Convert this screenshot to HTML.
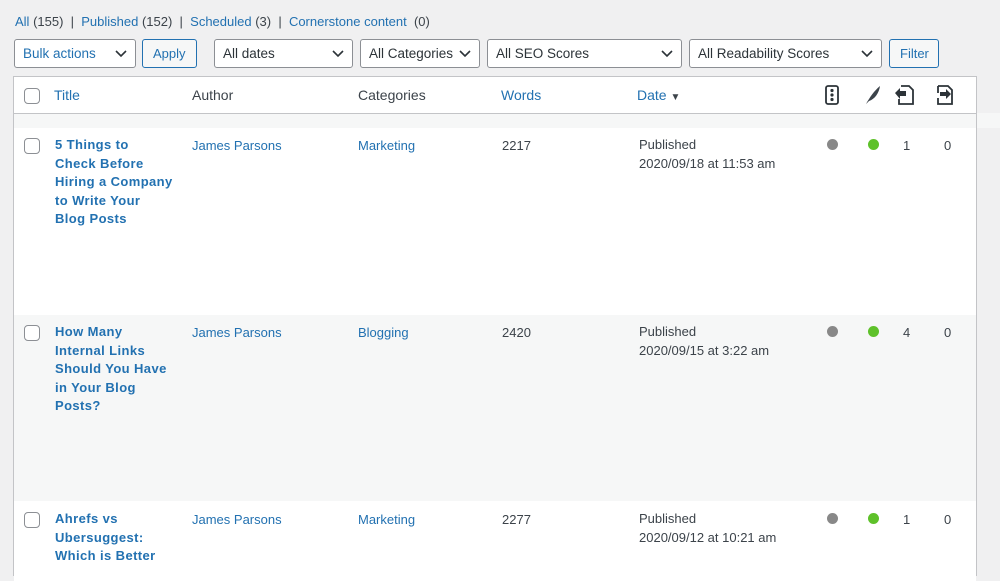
<!DOCTYPE html>
<html><head><style>
*{box-sizing:border-box;margin:0;padding:0}
body{width:1000px;height:560px;overflow:hidden;background:#f0f0f1;font-family:"Liberation Sans",sans-serif;font-size:13px;color:#3c434a;position:relative}
.a{position:absolute;white-space:nowrap}
a,.l{color:#2271b1;text-decoration:none}
.sel{position:absolute;top:39px;height:29px;border:1px solid #8c8f94;border-radius:3px;background:#fff;padding:6px 8px;font-size:13.5px;color:#2c3338}
.sel svg{position:absolute;right:8px;top:10px}
.btn{position:absolute;top:39px;height:29px;border:1px solid #2271b1;border-radius:3px;background:#f6f7f7;color:#2271b1;font-size:13px;padding:6px 10px}
.tbl{position:absolute;left:13px;top:76px;width:964px;height:500px;border:1px solid #c3c4c7;background:#fff}
.row{position:absolute;left:0;width:962px}
.cb{position:absolute;width:16px;height:16px;border:1px solid #8c8f94;border-radius:4px;background:#fff}
.t{font-weight:bold;color:#2271b1;font-size:13px;line-height:18.5px;letter-spacing:0.4px}
.dot{position:absolute;width:11px;height:11px;border-radius:50%}
</style></head><body>
<div class="a" style="left:15px;top:14px"><a>All</a> (155) &nbsp;|&nbsp; <a>Published</a> (152) &nbsp;|&nbsp; <a>Scheduled</a> (3) &nbsp;|&nbsp; <a>Cornerstone content</a> &nbsp;(0)</div>
<div class="sel" style="left:14px;width:122px;color:#2271b1">Bulk actions<svg width="12" height="8"><path d="M1 1l5 5 5-5" stroke="#2c3338" stroke-width="1.6" fill="none"/></svg></div>
<div class="btn" style="left:142px;width:55px">Apply</div>
<div class="sel" style="left:214px;width:139px">All dates<svg width="12" height="8"><path d="M1 1l5 5 5-5" stroke="#2c3338" stroke-width="1.6" fill="none"/></svg></div>
<div class="sel" style="left:360px;width:120px">All Categories<svg width="12" height="8"><path d="M1 1l5 5 5-5" stroke="#2c3338" stroke-width="1.6" fill="none"/></svg></div>
<div class="sel" style="left:487px;width:195px">All SEO Scores<svg width="12" height="8"><path d="M1 1l5 5 5-5" stroke="#2c3338" stroke-width="1.6" fill="none"/></svg></div>
<div class="sel" style="left:689px;width:193px">All Readability Scores<svg width="12" height="8"><path d="M1 1l5 5 5-5" stroke="#2c3338" stroke-width="1.6" fill="none"/></svg></div>
<div class="btn" style="left:889px;width:50px">Filter</div>

<div class="tbl">
 <div class="row" style="top:0;height:37px;border-bottom:1px solid #c3c4c7;background:#fff"></div>
 <div class="row" style="top:37px;height:14px;background:#f6f7f7"></div>
 <div class="row" style="top:51px;height:187px;background:#fff"></div>
 <div class="row" style="top:238px;height:186px;background:#f6f7f7"></div>
 <div class="row" style="top:424px;height:80px;background:#fff"></div>
</div>
<div class="a" style="left:977px;top:113px;width:23px;height:15px;background:#f6f7f7"></div>

<div class="cb" style="left:24px;top:88px"></div>
<div class="a l" style="left:54px;top:87px;font-size:14px">Title</div>
<div class="a" style="left:192px;top:87px;font-size:14px">Author</div>
<div class="a" style="left:358px;top:87px;font-size:14px">Categories</div>
<div class="a l" style="left:501px;top:87px;font-size:14px">Words</div>
<div class="a l" style="left:637px;top:87px;font-size:14px">Date <span style="color:#3c434a;font-size:10px">▼</span></div>
<svg class="a" style="left:825px;top:85px" width="14" height="20"><rect x="1" y="1" width="12" height="18" rx="2" fill="none" stroke="#2c3338" stroke-width="1.8"/><circle cx="7" cy="5.5" r="1.6" fill="#2c3338"/><circle cx="7" cy="10" r="1.6" fill="#2c3338"/><circle cx="7" cy="14.5" r="1.6" fill="#2c3338"/></svg>
<svg class="a" style="left:864px;top:85px" width="18" height="20"><path d="M2 19C6 12 10 6 16 1C15 8 11 14 5 16Z" fill="#3c434a"/></svg>
<svg class="a" style="left:893px;top:84px" width="22" height="22"><path d="M8 2h8l4 4v14H6v-5" fill="none" stroke="#2c3338" stroke-width="1.8"/><path d="M2 9l5-5v3h6v5H7v3z" fill="#2c3338"/></svg>
<svg class="a" style="left:934px;top:84px" width="22" height="22"><path d="M4 2h10l4 4v14H4v-6M4 9V2" fill="none" stroke="#2c3338" stroke-width="1.8"/><path d="M6 8h6V5l5 5-5 5v-3H6z" fill="#2c3338"/></svg>

<div class="cb" style="left:24px;top:138px"></div>
<div class="a t" style="left:55px;top:136px">5 Things to<br>Check Before<br>Hiring a Company<br>to Write Your<br>Blog Posts</div>
<div class="a l" style="left:192px;top:138px">James Parsons</div>
<div class="a l" style="left:358px;top:138px">Marketing</div>
<div class="a" style="left:502px;top:138px">2217</div>
<div class="a" style="left:639px;top:136px;line-height:18.5px">Published<br>2020/09/18 at 11:53 am</div>
<div class="dot" style="left:827px;top:139px;background:#888"></div>
<div class="dot" style="left:868px;top:139px;background:#5ec12a"></div>
<div class="a" style="left:903px;top:138px">1</div>
<div class="a" style="left:944px;top:138px">0</div>

<div class="cb" style="left:24px;top:325px"></div>
<div class="a t" style="left:55px;top:323px">How Many<br>Internal Links<br>Should You Have<br>in Your Blog<br>Posts?</div>
<div class="a l" style="left:192px;top:325px">James Parsons</div>
<div class="a l" style="left:358px;top:325px">Blogging</div>
<div class="a" style="left:502px;top:325px">2420</div>
<div class="a" style="left:639px;top:323px;line-height:18.5px">Published<br>2020/09/15 at 3:22 am</div>
<div class="dot" style="left:827px;top:326px;background:#888"></div>
<div class="dot" style="left:868px;top:326px;background:#5ec12a"></div>
<div class="a" style="left:903px;top:325px">4</div>
<div class="a" style="left:944px;top:325px">0</div>

<div class="cb" style="left:24px;top:512px"></div>
<div class="a t" style="left:55px;top:510px">Ahrefs vs<br>Ubersuggest:<br>Which is Better</div>
<div class="a l" style="left:192px;top:512px">James Parsons</div>
<div class="a l" style="left:358px;top:512px">Marketing</div>
<div class="a" style="left:502px;top:512px">2277</div>
<div class="a" style="left:639px;top:510px;line-height:18.5px">Published<br>2020/09/12 at 10:21 am</div>
<div class="dot" style="left:827px;top:513px;background:#888"></div>
<div class="dot" style="left:868px;top:513px;background:#5ec12a"></div>
<div class="a" style="left:903px;top:512px">1</div>
<div class="a" style="left:944px;top:512px">0</div>
</body></html>
